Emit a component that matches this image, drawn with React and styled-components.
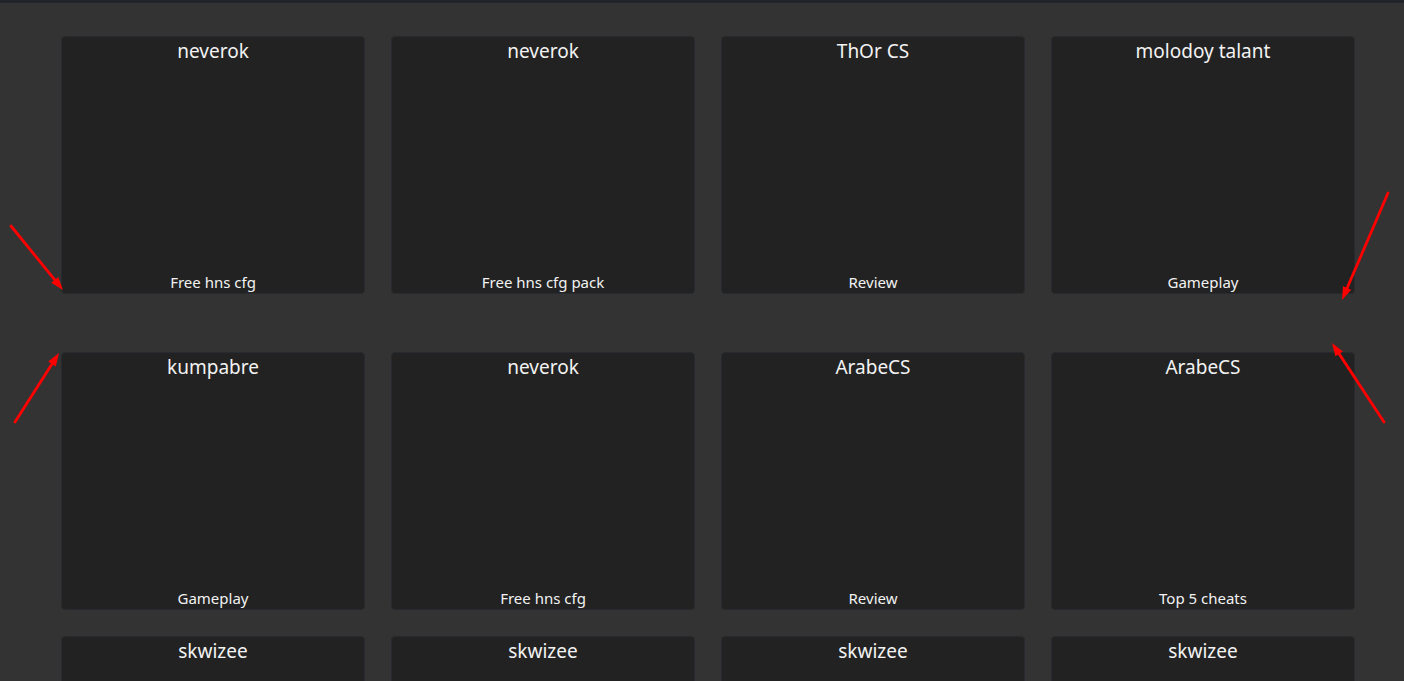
import React from 'react';
import styled, { createGlobalStyle } from 'styled-components';

const GlobalStyle = createGlobalStyle`
  html, body {
    margin: 0;
    padding: 0;
    height: 100%;
    background: #333333;
    overflow: hidden;
  }
  body {
    font-family: "Noto Sans", "Open Sans", sans-serif;
  }
`;

const Page = styled.div`
  position: relative;
  min-height: 100vh;
  background: #333333;
`;

const TopBar = styled.div`
  height: 3px;
  background: #212429;
`;

const Feed = styled.div`
  display: flex;
  flex-direction: column;
  gap: 26px;
  padding: 33px 49px 0 61px;
`;

const Row = styled.div`
  display: grid;
  grid-template-columns: repeat(4, 304px);
  column-gap: 26px;
  margin-bottom: ${({ $spaced }) => ($spaced ? '32px' : '0')};
`;

const Card = styled.div`
  height: 258px;
  box-sizing: border-box;
  background: #222222;
  border: 1px solid #272a2e;
  border-radius: 4px;
  display: flex;
  flex-direction: column;
  justify-content: space-between;
  align-items: center;
  color: #f2f2f2;
`;

const Author = styled.div`
  padding-top: 1px;
  font-size: 19px;
  line-height: 26px;
`;

const Tag = styled.div`
  padding-bottom: 1px;
  font-size: 15px;
  line-height: 20px;
`;

const Overlay = styled.svg`
  position: absolute;
  left: 0;
  top: 0;
  width: 1404px;
  height: 681px;
  pointer-events: none;
`;

const rows = [
  [
    { author: 'neverok', tag: 'Free hns cfg' },
    { author: 'neverok', tag: 'Free hns cfg pack' },
    { author: 'ThOr CS', tag: 'Review' },
    { author: 'molodoy talant', tag: 'Gameplay' },
  ],
  [
    { author: 'kumpabre', tag: 'Gameplay' },
    { author: 'neverok', tag: 'Free hns cfg' },
    { author: 'ArabeCS', tag: 'Review' },
    { author: 'ArabeCS', tag: 'Top 5 cheats' },
  ],
  [
    { author: 'skwizee', tag: '' },
    { author: 'skwizee', tag: '' },
    { author: 'skwizee', tag: '' },
    { author: 'skwizee', tag: '' },
  ],
];

// red annotation arrows drawn on top of the screenshot: [tailX, tailY, tipX, tipY]
const arrows = [
  [11, 226, 63, 290],
  [15, 422, 59, 353],
  [1388, 193, 1342, 300],
  [1384, 422, 1332, 343],
];

const Arrow = ({ x1, y1, x2, y2 }) => {
  const ang = Math.atan2(y2 - y1, x2 - x1);
  const len = 13;
  const half = 4.5;
  const bx = x2 - len * Math.cos(ang);
  const by = y2 - len * Math.sin(ang);
  const px = -Math.sin(ang) * half;
  const py = Math.cos(ang) * half;
  return (
    <g>
      <line x1={x1} y1={y1} x2={bx} y2={by} stroke="#ff0000" strokeWidth="2.8" strokeLinecap="round" />
      <polygon points={`${x2},${y2} ${bx + px},${by + py} ${bx - px},${by - py}`} fill="#ff0000" />
    </g>
  );
};

const App = () => {
  return (
    <Page>
      <GlobalStyle />
      <TopBar />
      <Feed>
        {rows.map((row, i) => (
          <Row key={i} $spaced={i === 0}>
            {row.map((item, j) => (
              <Card key={j}>
                <Author>{item.author}</Author>
                <Tag>{item.tag}</Tag>
              </Card>
            ))}
          </Row>
        ))}
      </Feed>
      <Overlay viewBox="0 0 1404 681">
        {arrows.map(([x1, y1, x2, y2], i) => (
          <Arrow key={i} x1={x1} y1={y1} x2={x2} y2={y2} />
        ))}
      </Overlay>
    </Page>
  );
};

export default App;
